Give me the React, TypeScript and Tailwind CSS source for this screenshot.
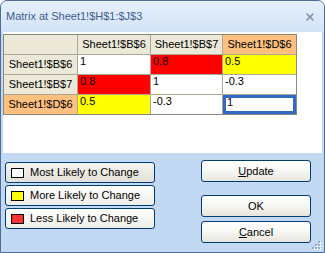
import { X } from 'lucide-react';

const FONT = { fontFamily: '"Liberation Sans", Arial, sans-serif' };

type Cell = { text: string; bg: string };

const HEADERS = ['Sheet1!$B$6', 'Sheet1!$B$7', 'Sheet1!$D$6'];

const ROWS: { label: string; orange: boolean; cells: Cell[] }[] = [
  {
    label: 'Sheet1!$B$6',
    orange: false,
    cells: [
      { text: '1', bg: 'bg-white' },
      { text: '0.8', bg: 'bg-[#ff0000]' },
      { text: '0.5', bg: 'bg-[#ffff00]' },
    ],
  },
  {
    label: 'Sheet1!$B$7',
    orange: false,
    cells: [
      { text: '0.8', bg: 'bg-[#ff0000]' },
      { text: '1', bg: 'bg-white' },
      { text: '-0.3', bg: 'bg-white' },
    ],
  },
  {
    label: 'Sheet1!$D$6',
    orange: true,
    cells: [
      { text: '0.5', bg: 'bg-[#ffff00]' },
      { text: '-0.3', bg: 'bg-white' },
      { text: '1', bg: 'bg-white' },
    ],
  },
];

const LEGEND = [
  { label: 'Most Likely to Change', swatch: 'bg-white', face: 'bg-gradient-to-b from-[#f4f3ee] to-[#e3e1d8]' },
  { label: 'More Likely to Change', swatch: 'bg-[#ffff00]', face: 'bg-gradient-to-b from-white to-[#efeee8]' },
  { label: 'Less Likely to Change', swatch: 'bg-[#ff3333]', face: 'bg-gradient-to-b from-white to-[#efeee8]' },
];

function XpButton({ children, className = '' }: { children: React.ReactNode; className?: string }) {
  return (
    <div
      className={`flex h-[22px] w-[110px] items-center justify-center rounded-[3px] border border-[#003c74] bg-gradient-to-b from-white via-[#f7f7f4] to-[#e6e4dc] text-[11px] text-black ${className}`}
    >
      {children}
    </div>
  );
}

export default function App() {
  return (
    <div
      className="flex h-[253px] w-[325px] flex-col overflow-hidden rounded-t-[7px] border border-[#4d6d99] bg-[#c3d9f3]"
      style={FONT}
    >
      {/* Title bar */}
      <div className="flex h-[31px] shrink-0 items-center justify-between bg-gradient-to-b from-[#e6effb] to-[#d3e3f7] pl-[5px] pr-[8px]">
        <span className="text-[11px] text-[#3e5e8e]">Matrix at Sheet1!$H$1:$J$3</span>
        <X className="h-[12px] w-[12px] text-[#8094ae]" strokeWidth={3.2} />
      </div>

      <div className="flex flex-1 flex-col px-[2px] pb-[1px]">
        {/* Grid area */}
        <div className="h-[121px] bg-white pt-[2px]">
          <div className="grid w-[294px] grid-cols-[73px_72px_71px_73px] gap-px border border-[#8a887d] bg-[#aca899] text-[11px] leading-[13px] text-black">
            <div className="h-[19px] bg-[#ece9d8]" />
            {HEADERS.map((h, i) => (
              <div
                key={h}
                className={`flex h-[19px] items-center justify-center ${i === 2 ? 'bg-[#ffc07f]' : 'bg-[#ece9d8]'}`}
              >
                {h}
              </div>
            ))}
            {ROWS.map((row, r) => (
              <div key={row.label} className="contents">
                <div
                  className={`flex h-[19px] items-center justify-center ${row.orange ? 'bg-[#ffc07f]' : 'bg-[#ece9d8]'}`}
                >
                  {row.label}
                </div>
                {row.cells.map((c, ci) =>
                  r === 2 && ci === 2 ? (
                    <div key={ci} className="h-[19px] border-[3px] border-[#316ac5] bg-white pl-[1px] leading-[13px]">
                      <span className="-mt-[2px] block">1</span>
                    </div>
                  ) : (
                    <div key={ci} className={`h-[19px] pl-[2px] ${c.bg}`}>
                      {c.text}
                    </div>
                  )
                )}
              </div>
            ))}
          </div>
        </div>

        {/* Buttons panel */}
        <div className="relative flex flex-1 justify-between pl-[2px] pr-[11px]">
          <div className="flex flex-col gap-[2px] pt-[9px]">
            {LEGEND.map((l) => (
              <div
                key={l.label}
                className={`flex h-[21px] w-[150px] items-center gap-[6px] rounded-[3px] border border-[#003c74] pl-[5px] text-[11px] text-black ${l.face}`}
              >
                <span className={`h-[10px] w-[13px] border border-black ${l.swatch}`} />
                <span>{l.label}</span>
              </div>
            ))}
          </div>
          <div className="flex flex-col pt-[7px]">
            <XpButton>
              <span>
                <span className="underline">U</span>pdate
              </span>
            </XpButton>
            <XpButton className="mt-[13px]">OK</XpButton>
            <XpButton className="mt-[4px]">
              <span>
                <span className="underline">C</span>ancel
              </span>
            </XpButton>
          </div>
          {/* resize grip */}
          <svg className="absolute bottom-[1px] right-[1px]" width="10" height="10" viewBox="0 0 10 10">
            {[
              [8, 2],
              [5, 5],
              [8, 5],
              [2, 8],
              [5, 8],
              [8, 8],
            ].map(([x, y]) => (
              <g key={`${x}-${y}`}>
                <rect x={x} y={y} width="2" height="2" fill="#ffffff" />
                <rect x={x - 1} y={y - 1} width="2" height="2" fill="#97a9c2" />
              </g>
            ))}
          </svg>
        </div>
      </div>
    </div>
  );
}
